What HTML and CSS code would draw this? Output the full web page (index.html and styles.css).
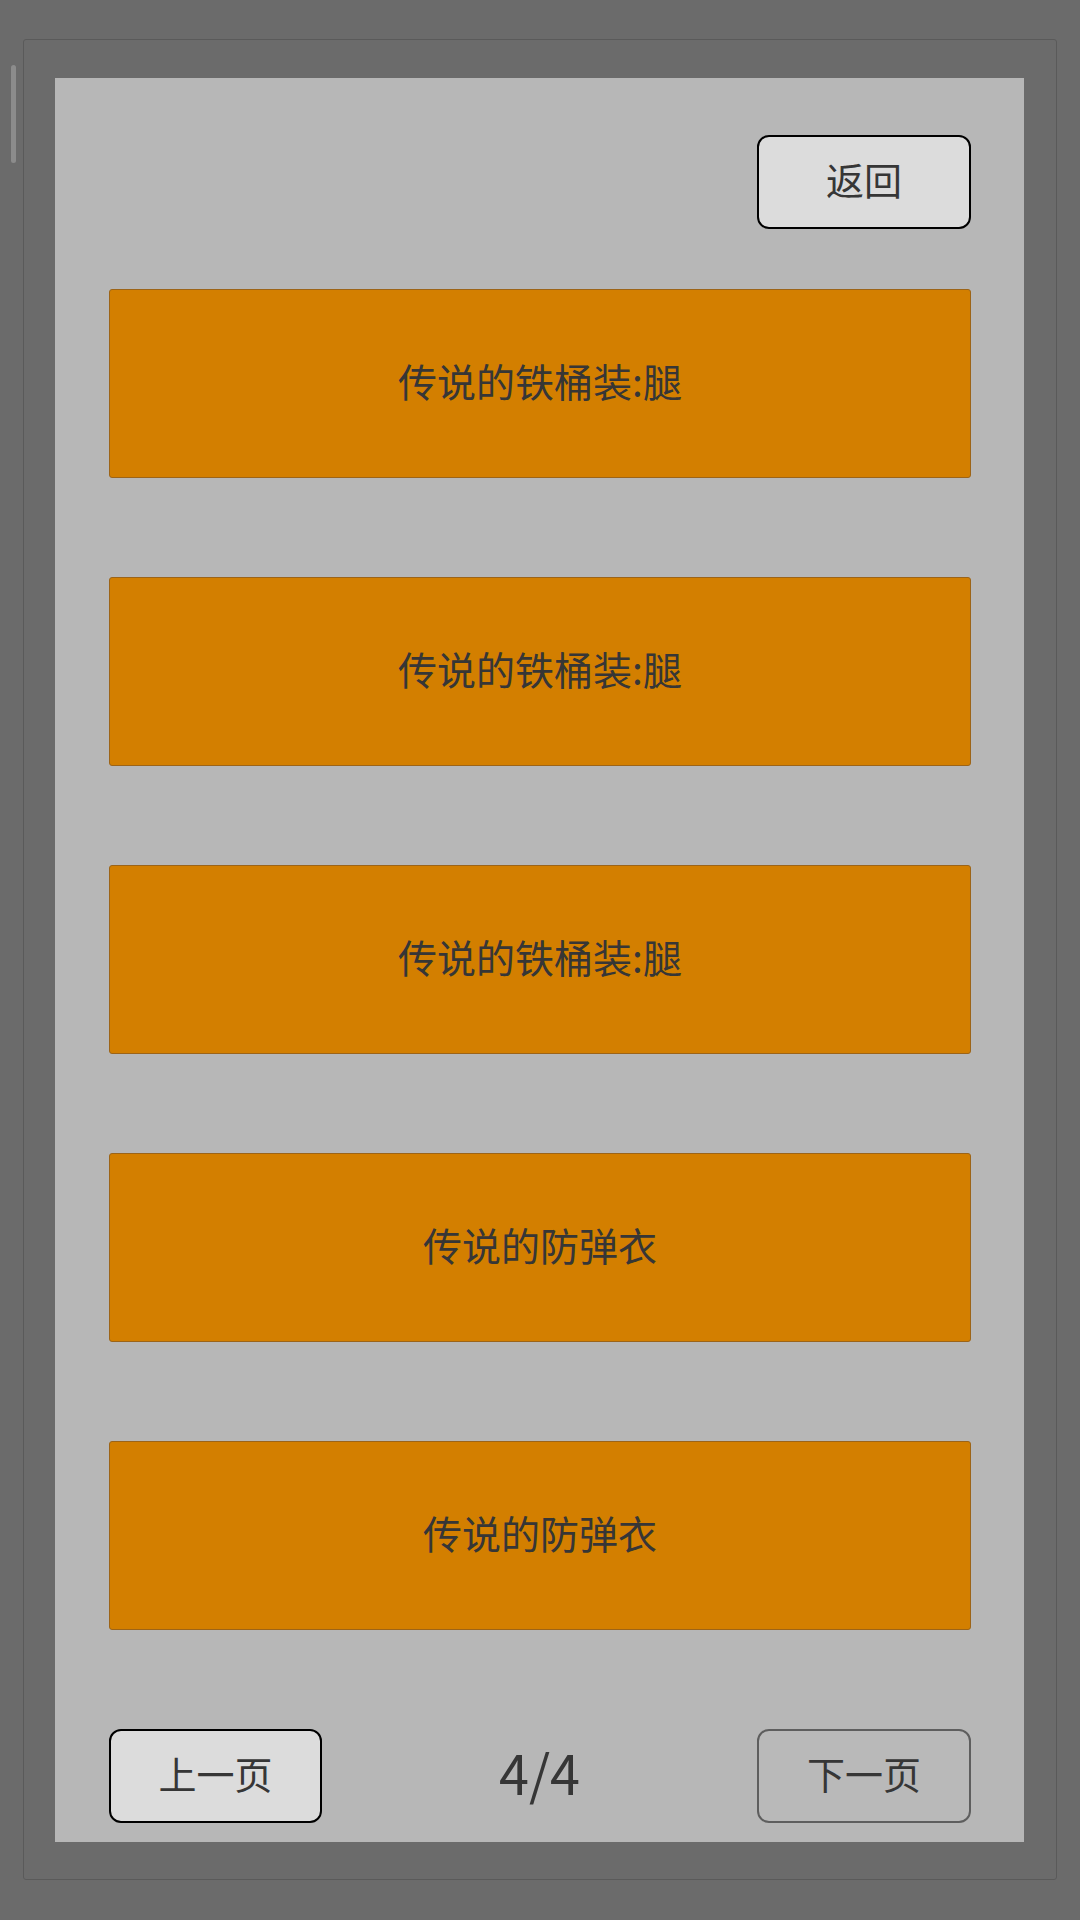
FILE: index.html
```html
<!DOCTYPE html>
<html lang="zh-CN">
<head>
<meta charset="utf-8">
<title>装备列表</title>
<link rel="stylesheet" href="styles.css">
</head>
<body>
<div class="scrollbar"></div>
<div class="frame">
  <div class="panel">
    <div class="top-row">
      <button class="btn btn-active">返回</button>
    </div>
    <div class="list">
      <div class="item">传说的铁桶装:腿</div>
      <div class="item">传说的铁桶装:腿</div>
      <div class="item">传说的铁桶装:腿</div>
      <div class="item">传说的防弹衣</div>
      <div class="item">传说的防弹衣</div>
    </div>
    <div class="pager">
      <button class="btn btn-active">上一页</button>
      <div class="page-num">4/4</div>
      <button class="btn btn-disabled">下一页</button>
    </div>
  </div>
</div>
</body>
</html>
```

FILE: styles.css
```css
html, body {
  margin: 0;
  padding: 0;
}
body {
  width: 1080px;
  height: 1920px;
  background: #6b6b6b;
  font-family: "Noto Sans CJK SC", "Noto Sans", sans-serif;
  color: #363636;
  position: relative;
  overflow: hidden;
}
.scrollbar {
  position: absolute;
  left: 11px;
  top: 65px;
  width: 5px;
  height: 98px;
  border-radius: 3px;
  background: #8c8c8c;
}
.frame {
  margin: 39px 23px 0 23px;
  height: 1841px;
  border: 1px solid #5a5a5a;
  border-radius: 3px;
  padding: 38px 32px 0 31px;
  box-sizing: border-box;
}
.panel {
  background: #b7b7b7;
  height: 1764px;
  box-sizing: border-box;
  padding: 57px 53px 0 54px;
  display: flex;
  flex-direction: column;
}
.top-row {
  display: flex;
  justify-content: flex-end;
}
.btn {
  width: 214px;
  height: 94px;
  box-sizing: border-box;
  border-radius: 12px;
  font-family: "Noto Sans CJK SC", "Noto Sans", sans-serif;
  font-size: 38px;
  line-height: 1;
  color: #363636;
  display: flex;
  align-items: center;
  justify-content: center;
  padding: 0 0 7px 0;
}
.btn-active {
  background: #dcdcdc;
  border: 2px solid #000;
}
.btn-disabled {
  background: #b9b9b9;
  border: 2px solid #5e5e5e;
}
.list {
  margin-top: 60px;
  display: flex;
  flex-direction: column;
  gap: 99px;
}
.item {
  height: 189px;
  box-sizing: border-box;
  background: #d37f00;
  border: 1px solid #9c6418;
  border-radius: 3px;
  display: flex;
  align-items: center;
  justify-content: center;
  font-size: 39px;
  line-height: 1;
  padding-bottom: 7px;
}
.pager {
  margin-top: 99px;
  display: flex;
  align-items: center;
  justify-content: space-between;
}
.pager .btn:first-child {
  width: 213px;
}
.page-num {
  font-size: 54px;
  line-height: 1;
  padding-bottom: 8px;
  color: #363636;
}
```
